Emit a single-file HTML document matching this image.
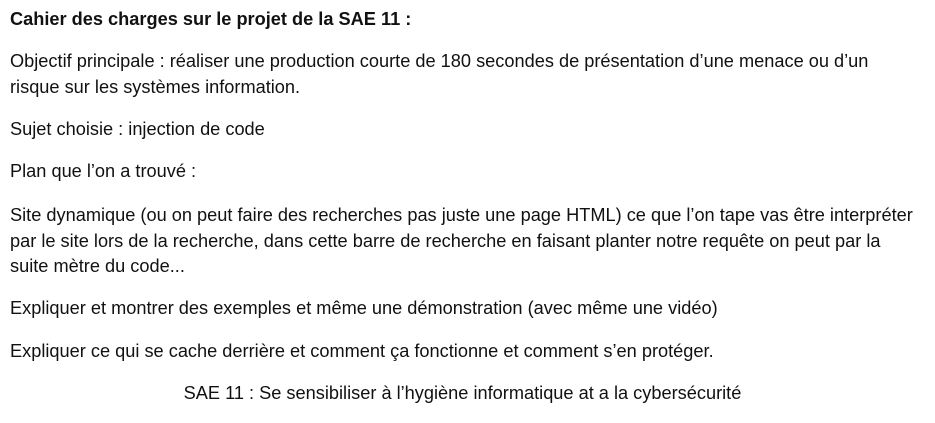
<!DOCTYPE html>
<html><head><meta charset="utf-8"><style>
body{margin:0;width:935px;height:423px;background:#fff;overflow:hidden;position:relative;font-family:"Liberation Sans",Arial,sans-serif;font-size:18.2px;color:#111;}
.l{position:absolute;left:10px;white-space:nowrap;line-height:20px;}
b{font-weight:bold;}
</style></head><body>
<div class="l" style="top:9px"><b>Cahier des charges sur le projet de la SAE 11 :</b></div>
<div class="l" style="top:51px">Objectif principale : réaliser une production courte de 180 secondes de présentation d’une menace ou d’un</div>
<div class="l" style="top:77px">risque sur les systèmes information.</div>
<div class="l" style="top:119px">Sujet choisie : injection de code</div>
<div class="l" style="top:161px">Plan que l’on a trouvé :</div>
<div class="l" style="top:205px">Site dynamique (ou on peut faire des recherches pas juste une page HTML) ce que l’on tape vas être interpréter</div>
<div class="l" style="top:231px">par le site lors de la recherche, dans cette barre de recherche en faisant planter notre requête on peut par la</div>
<div class="l" style="top:256px">suite mètre du code...</div>
<div class="l" style="top:298px">Expliquer et montrer des exemples et même une démonstration (avec même une vidéo)</div>
<div class="l" style="top:341px">Expliquer ce qui se cache derrière et comment ça fonctionne et comment s’en protéger.</div>
<div class="l" style="top:383px;left:0;width:925px;text-align:center">SAE 11 : Se sensibiliser à l’hygiène informatique at a la cybersécurité</div>
</body></html>
